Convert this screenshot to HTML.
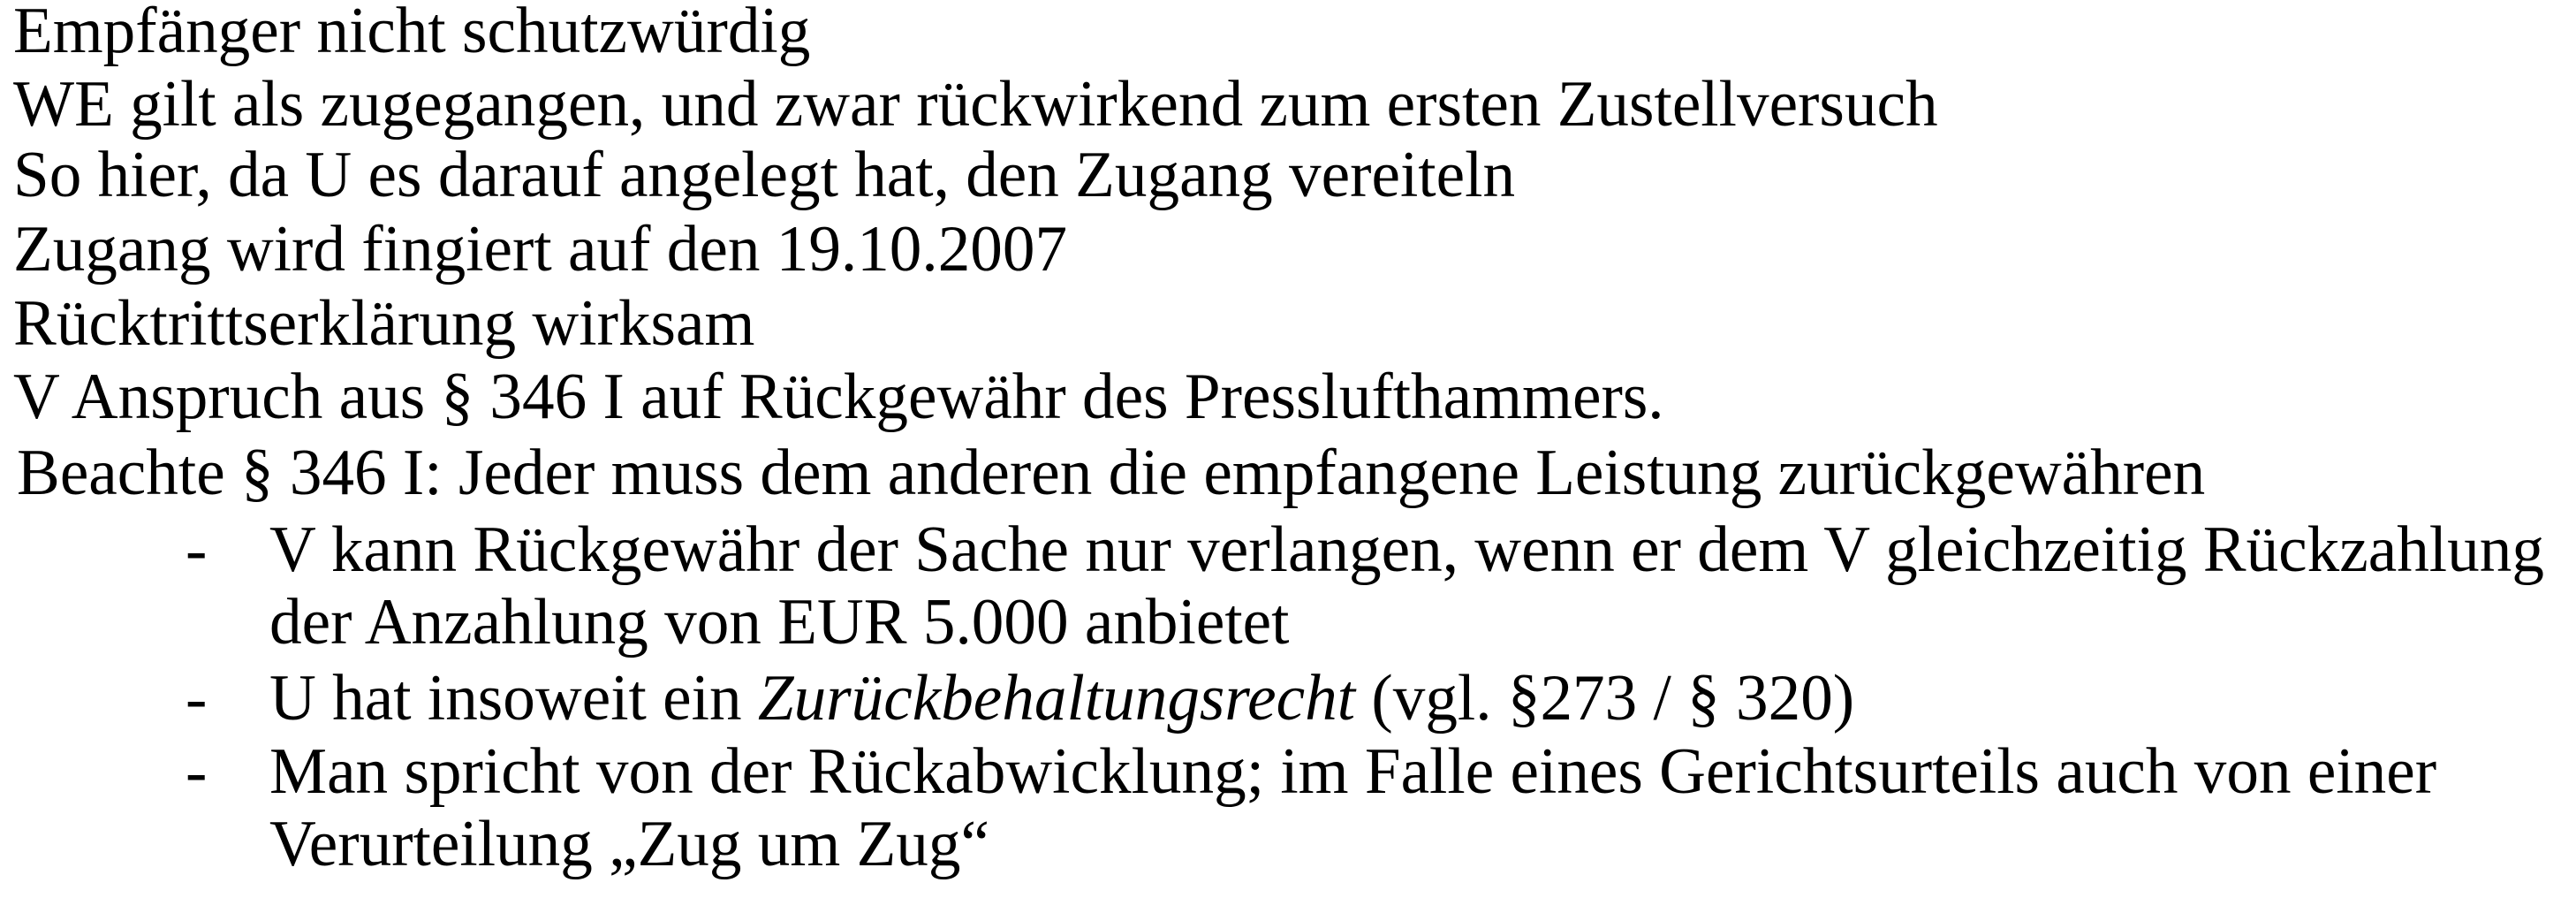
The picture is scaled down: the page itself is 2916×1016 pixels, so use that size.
<!DOCTYPE html>
<html><head><meta charset="utf-8"><style>
html,body{margin:0;padding:0;background:#fff;}
body{width:2916px;height:1016px;position:relative;overflow:hidden;font-family:"Liberation Serif",serif;font-size:74px;color:#000;}
div.l{position:absolute;white-space:nowrap;line-height:62px;transform:scaleX(0.989);transform-origin:0 0;}
</style></head><body>
<div class="l" style="left:15px;top:4px">Empfänger nicht schutzwürdig</div>
<div class="l" style="left:15px;top:87px">WE gilt als zugegangen, und zwar rückwirkend zum ersten Zustellversuch</div>
<div class="l" style="left:15px;top:167px">So hier, da U es darauf angelegt hat, den Zugang vereiteln</div>
<div class="l" style="left:15px;top:251px">Zugang wird fingiert auf den 19.10.2007</div>
<div class="l" style="left:15px;top:335px">Rücktrittserklärung wirksam</div>
<div class="l" style="left:15px;top:418px">V Anspruch aus § 346 I auf Rückgewähr des Presslufthammers.</div>
<div class="l" style="left:19px;top:504px">Beachte § 346 I: Jeder muss dem anderen die empfangene Leistung zurückgewähren</div>
<div class="l" style="left:210px;top:591px">-</div>
<div class="l" style="left:305px;top:591px">V kann Rückgewähr der Sache nur verlangen, wenn er dem V gleichzeitig Rückzahlung</div>
<div class="l" style="left:305px;top:673px">der Anzahlung von EUR 5.000 anbietet</div>
<div class="l" style="left:210px;top:759px">-</div>
<div class="l" style="left:305px;top:759px">U hat insoweit ein <i>Zurückbehaltungsrecht</i> (vgl. §273 / § 320)</div>
<div class="l" style="left:210px;top:842px">-</div>
<div class="l" style="left:305px;top:842px">Man spricht von der Rückabwicklung; im Falle eines Gerichtsurteils auch von einer</div>
<div class="l" style="left:305px;top:924px">Verurteilung „Zug um Zug“</div>
</body></html>
